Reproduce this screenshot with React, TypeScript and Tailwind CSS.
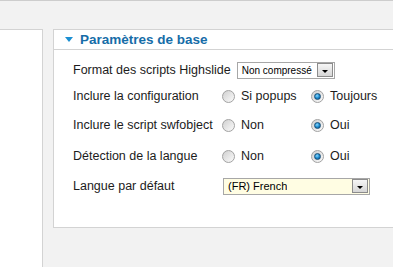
import React from "react"

const LABEL = "w-[149px] shrink-0"

function Radio({ checked }: { checked?: boolean }) {
  return (
    <span className="w-[13px] h-[13px] shrink-0 rounded-full border border-[#a2a2a2] bg-[linear-gradient(135deg,#d0d0d0,#fbfbfb)] flex items-center justify-center">
      {checked && (
        <span className="w-[7px] h-[7px] rounded-full border border-[#184f78] bg-[radial-gradient(circle_at_40%_35%,#8ad8ff_0%,#1d8ccf_50%,#0d4d82_100%)]" />
      )}
    </span>
  )
}

function Option({ label, checked, wide }: { label: string; checked?: boolean; wide?: boolean }) {
  return (
    <div className={`flex items-center ${wide ? "w-[89px]" : ""}`}>
      <Radio checked={checked} />
      <span className="ml-[6px]">{label}</span>
    </div>
  )
}

function Select({ value, className }: { value: string; className: string }) {
  return (
    <div className={`h-[17px] flex items-center border border-[#a7a7a7] text-black ${className}`}>
      <span className="pl-[4px] truncate">{value}</span>
      <span className="ml-auto mr-[1px] w-[16px] h-[14px] shrink-0 border border-[#8c8c8c] bg-[linear-gradient(#f6f6f6,#d6d6d6)] flex items-center justify-center">
        <span className="mt-[2px] w-0 h-0 border-l-[3px] border-r-[3px] border-t-[3px] border-l-transparent border-r-transparent border-t-black" />
      </span>
    </div>
  )
}

export default function App() {
  return (
    <div className="w-[393px] h-[267px] overflow-hidden bg-[#f2f2f2] border-t border-[#cdcdcd] font-['Liberation_Sans',Arial,sans-serif] text-[#1c1c1c]">
      <div className="h-[28px]" />
      <div className="flex">
        <div className="w-[43px] h-[240px] shrink-0 bg-white border-t border-r border-[#d3d3d3]" />
        <div className="ml-[10px] w-[400px] h-[199px] shrink-0 bg-white border border-[#d3d3d3]">
          <div className="h-[20px] border-b border-[#d3d3d3] flex items-center pl-[11px]">
            <span className="w-0 h-0 border-l-[4px] border-r-[4px] border-t-[5px] border-l-transparent border-r-transparent border-t-[#1b8fd2]" />
            <h2 className="ml-[7px] text-[13.5px] font-bold text-[#166da8] leading-none">
              Paramètres de base
            </h2>
          </div>
          <div className="pt-[8px] pl-[19px] text-[12.5px]">
            <div className="h-[24px] flex items-center">
              <span>Format des scripts Highslide</span>
              <Select value="Non compressé" className="ml-[6px] w-[98px] bg-white text-[10px]" />
            </div>
            <div className="h-[28px] flex items-center">
              <span className={LABEL}>Inclure la configuration</span>
              <Option label="Si popups" wide />
              <Option label="Toujours" checked />
            </div>
            <div className="h-[30px] flex items-center">
              <span className={LABEL}>Inclure le script swfobject</span>
              <Option label="Non" wide />
              <Option label="Oui" checked />
            </div>
            <div className="h-[32px] flex items-center">
              <span className={LABEL}>Détection de la langue</span>
              <Option label="Non" wide />
              <Option label="Oui" checked />
            </div>
            <div className="h-[28px] flex items-center">
              <span className="w-[150px] shrink-0">Langue par défaut</span>
              <Select value="(FR) French" className="w-[147px] bg-[#fffde3] text-[11px]" />
            </div>
          </div>
        </div>
      </div>
    </div>
  )
}
